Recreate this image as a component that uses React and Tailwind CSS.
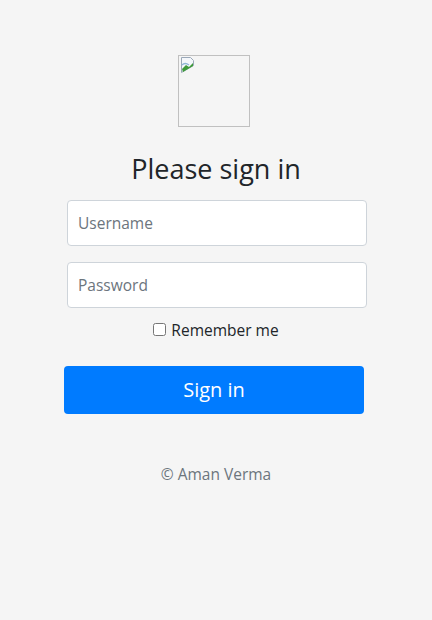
import { useState } from 'react';

function BrokenImage() {
  return (
    <div className="w-[72px] h-[72px] border border-[#c0c0c0] ml-[112px] mb-[25px] box-border">
      <svg width="16" height="16" viewBox="0 0 16 16" className="mt-[1px] ml-[1px]">
        <path d="M1.5 0.5h9l3 3v5l-12 7z" fill="#f4f7fb" stroke="#9aa8b8" />
        <path d="M2 12 L6 8 L9 10 L13 6 L13 9 L3 15z" fill="#3e9a3a" />
        <path d="M2 8 Q5 5 9 8" fill="none" stroke="#8fb6d6" strokeWidth="1.5" />
      </svg>
    </div>
  );
}

export default function App() {
  const [remember, setRemember] = useState(false);

  return (
    <div className="min-h-[620px] bg-[#f5f5f5] pt-[55px] text-[#212529] font-['Open_Sans',sans-serif]">
      <form className="w-[330px] mx-auto px-[15px] text-center" onSubmit={(e) => e.preventDefault()}>
        <BrokenImage />
        <h1 className="text-[27px] leading-[1.25] font-normal mb-[14px]">Please sign in</h1>
        <input
          type="text"
          placeholder="Username"
          className="block w-[300px] ml-[1px] h-[46px] px-[10px] bg-white border border-[#ced4da] rounded text-[15.5px] placeholder-[#6c757d] focus:outline-none mb-4"
        />
        <input
          type="password"
          placeholder="Password"
          className="block w-[300px] ml-[1px] h-[46px] px-[10px] bg-white border border-[#ced4da] rounded text-[15.5px] placeholder-[#6c757d] focus:outline-none mb-[10px]"
        />
        <div className="mb-4">
          <label className="inline-flex items-center gap-[5px] mb-2 leading-6 text-[15.5px]">
            <input
              type="checkbox"
              checked={remember}
              onChange={() => setRemember(!remember)}
              className="w-[13px] h-[13px]"
            />
            Remember me
          </label>
        </div>
        <button
          type="submit"
          className="block w-[300px] -ml-[2px] h-[48px] bg-[#007bff] text-white text-xl rounded"
        >
          Sign in
        </button>
        <p className="mt-12 mb-4 leading-6 text-[15.5px] text-[#6c757d]">© Aman Verma</p>
      </form>
    </div>
  );
}
